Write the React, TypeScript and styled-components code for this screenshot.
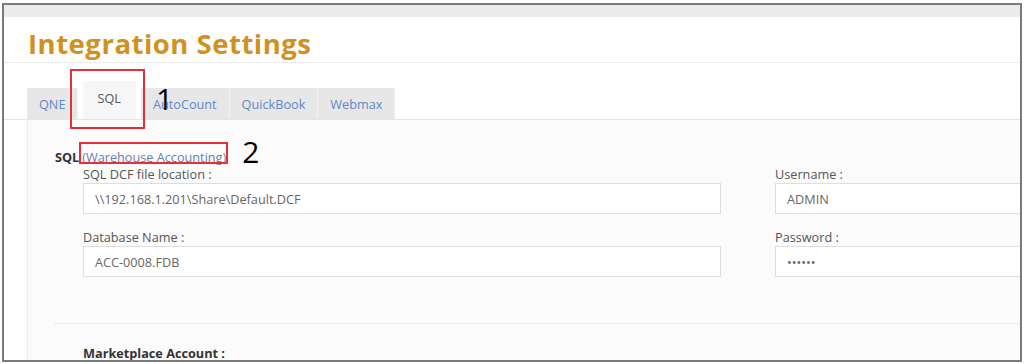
import styled, { createGlobalStyle } from "styled-components";

const GlobalStyle = createGlobalStyle`
  html, body {
    margin: 0;
    padding: 0;
    background: #ffffff;
  }
  body {
    font-family: "Open Sans", "Liberation Sans", sans-serif;
  }
`;

/////////////////////////////////////////////////////////// Frame

const Frame = styled.div`
  margin: 3px 2px 0 2px;
  width: 1020px;
  height: 359px;
  box-sizing: border-box;
  border: 2px solid #7b7b7b;
  background: #ffffff;
  overflow: hidden;
  position: relative;
`;

const TopStrip = styled.div`
  height: 12px;
  background: #ececec;
`;

const Header = styled.div`
  height: 45px;
  padding-left: 24px;
  border-bottom: 1px dotted #dcdcdc;
  display: flex;
  align-items: center;
`;

const Title = styled.h1`
  margin: 0;
  padding-top: 7px;
  font-size: 27.5px;
  font-weight: 700;
  color: #d1911f;
  letter-spacing: 0.5px;
`;

/////////////////////////////////////////////////////////// Tabs

const TabBar = styled.div`
  position: relative;
  margin-top: 18px;
  padding-left: 23px;
  height: 38px;
  display: flex;
  align-items: flex-end;
  border-bottom: 1px solid #e4e4e4;
`;

const Tab = styled.div<{ $active?: boolean }>`
  box-sizing: border-box;
  height: ${(p) => (p.$active ? "38px" : "31px")};
  padding: ${(p) => (p.$active ? "0 14px 4px" : "0 12px")};
  margin: ${(p) => (p.$active ? "0 5px" : "0")};
  display: flex;
  align-items: center;
  font-size: 12.7px;
  color: ${(p) => (p.$active ? "#555555" : "#5f88c4")};
  background: ${(p) => (p.$active ? "#f6f6f6" : "#e7e7e7")};
  border-right: 1px solid ${(p) => (p.$active ? "#f6f6f6" : "#f2f2f2")};
`;

const RedBox = styled.div<{ $x: number; $y: number; $w: number; $h: number }>`
  position: absolute;
  left: ${(p) => p.$x}px;
  top: ${(p) => p.$y}px;
  width: ${(p) => p.$w}px;
  height: ${(p) => p.$h}px;
  box-sizing: border-box;
  border: 2px solid #e2313a;
  pointer-events: none;
`;

const Marker = styled.span<{ $x: number; $y: number }>`
  position: absolute;
  left: ${(p) => p.$x}px;
  top: ${(p) => p.$y}px;
  font-family: "Open Sans", "Liberation Sans", sans-serif;
  font-size: 30px;
  line-height: 30px;
  font-weight: 400;
  color: #000000;
`;

/////////////////////////////////////////////////////////// Panel

const Panel = styled.div`
  margin-left: 23px;
  border-left: 1px solid #ececec;
  background: #fbfbfb;
  height: 260px;
  padding: 28px 0 0 27px;
  box-sizing: border-box;
`;

const SectionTitle = styled.div`
  font-size: 12.7px;
  font-weight: 700;
  color: #333333;
  height: 18px;
  display: flex;
  align-items: center;
`;

const SectionLink = styled.span`
  position: relative;
  font-weight: 400;
  color: #6a7fb0;
  margin-left: 3px;
`;

const Columns = styled.div`
  display: grid;
  grid-template-columns: 638px 300px;
  column-gap: 54px;
  padding-left: 28px;
`;

const Field = styled.div`
  display: flex;
  flex-direction: column;
`;

const Label = styled.label`
  font-size: 12.7px;
  color: #555555;
  height: 16px;
  line-height: 16px;
  margin-bottom: 1px;
`;

const Input = styled.div`
  height: 31px;
  box-sizing: border-box;
  border: 1px solid #dedede;
  background: #ffffff;
  padding-left: 11px;
  display: flex;
  align-items: center;
  font-size: 12.7px;
  color: #666666;
  margin-bottom: 15px;
`;

const Divider = styled.div`
  margin-top: 31px;
  border-top: 1px dotted #dddddd;
`;

const SubHeading = styled.div`
  margin-top: 20px;
  padding-left: 28px;
  font-size: 12.7px;
  font-weight: 700;
  color: #333333;
`;

export default function App() {
  return (
    <>
      <GlobalStyle />
      <Frame>
        <TopStrip />
        <Header>
          <Title>Integration Settings</Title>
        </Header>
        <TabBar>
          <Tab>QNE</Tab>
          <Tab $active>SQL</Tab>
          <Tab>AutoCount</Tab>
          <Tab>QuickBook</Tab>
          <Tab>Webmax</Tab>
          <RedBox $x={66} $y={-12} $w={75} $h={60} />
          <Marker $x={152} $y={3}>1</Marker>
        </TabBar>
        <Panel>
          <SectionTitle>
            SQL
            <SectionLink>
              (Warehouse Accounting)
              <RedBox $x={-3} $y={-6} $w={149} $h={22} />
              <Marker $x={160} $y={-11}>2</Marker>
            </SectionLink>
          </SectionTitle>
          <Columns>
            <div>
              <Field>
                <Label>SQL DCF file location :</Label>
                <Input>\\192.168.1.201\Share\Default.DCF</Input>
              </Field>
              <Field>
                <Label>Database Name :</Label>
                <Input>ACC-0008.FDB</Input>
              </Field>
            </div>
            <div>
              <Field>
                <Label>Username :</Label>
                <Input>ADMIN</Input>
              </Field>
              <Field>
                <Label>Password :</Label>
                <Input>••••••</Input>
              </Field>
            </div>
          </Columns>
          <Divider />
          <SubHeading>Marketplace Account :</SubHeading>
        </Panel>
      </Frame>
    </>
  );
}
